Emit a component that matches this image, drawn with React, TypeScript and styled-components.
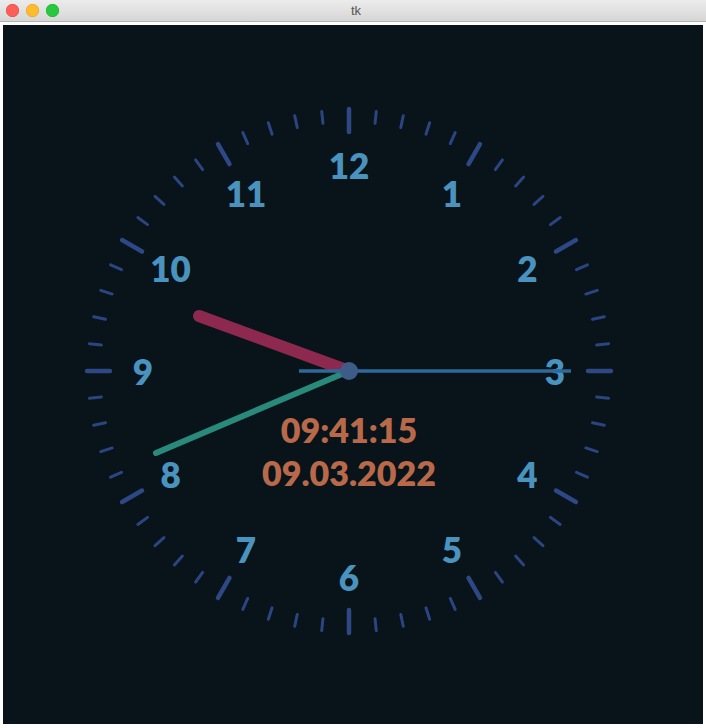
import React from "react";
import styled, { createGlobalStyle } from "styled-components";

const GlobalStyle = createGlobalStyle`
  html, body { margin: 0; padding: 0; background: #ffffff; }
  body { font-family: "Lato", "Liberation Sans", sans-serif; }
`;

const Window = styled.div`
  width: 706px;
  height: 728px;
  display: flex;
  flex-direction: column;
  background: #ffffff;
  overflow: hidden;
`;

const TitleBar = styled.div`
  height: 21px;
  flex: 0 0 21px;
  display: flex;
  align-items: center;
  position: relative;
  background: linear-gradient(#ececec, #d6d6d6);
  border-bottom: 1px solid #b4b4b4;
`;

const Lights = styled.div`
  display: flex;
  gap: 7px;
  padding-left: 6px;
`;

const Light = styled.span<{ $fill: string; $edge: string }>`
  width: 13px;
  height: 13px;
  border-radius: 50%;
  background: ${(p) => p.$fill};
  box-shadow: inset 0 0 0 0.5px ${(p) => p.$edge};
`;

const Title = styled.div`
  position: absolute;
  left: 0;
  right: 0;
  text-align: center;
  font-family: "Liberation Sans", "Noto Sans", sans-serif;
  font-weight: 400;
  font-size: 13px;
  color: #555555;
  padding-left: 6px;
`;

const Body = styled.div`
  flex: 1;
  display: flex;
  padding: 3px 3px 4px 3px;
`;

const Canvas = styled.div`
  flex: 1;
  background: #08131a;
  display: flex;
`;

const ClockSvg = styled.svg`
  display: block;
`;

const CX = 346;
const CY = 346;

const ticks = Array.from({ length: 60 }, (_, i) => {
  const a = (i * 6 * Math.PI) / 180;
  const major = i % 5 === 0;
  const r1 = major ? 239 : 249;
  const r2 = major ? 262 : 261;
  const s = Math.sin(a);
  const c = Math.cos(a);
  return {
    key: i,
    major,
    x1: CX + r1 * s,
    y1: CY - r1 * c,
    x2: CX + r2 * s,
    y2: CY - r2 * c,
  };
});

const numerals = Array.from({ length: 12 }, (_, i) => {
  const n = i + 1;
  const a = (n * 30 * Math.PI) / 180;
  return { n, x: CX + 206 * Math.sin(a), y: CY - 206 * Math.cos(a) };
});

const NUM_FONT = `"Lato", "Liberation Sans", sans-serif`;

export default function App() {
  return (
    <>
      <GlobalStyle />
      <Window>
        <TitleBar>
          <Lights>
            <Light $fill="#fc5f57" $edge="#de4840" />
            <Light $fill="#fdbc2e" $edge="#dd9d22" />
            <Light $fill="#28c840" $edge="#1aab29" />
          </Lights>
          <Title>tk</Title>
        </TitleBar>
        <Body>
          <Canvas>
            <ClockSvg width="700" height="699" viewBox="0 0 700 699">
              {ticks.map((t) => (
                <line
                  key={t.key}
                  x1={t.x1}
                  y1={t.y1}
                  x2={t.x2}
                  y2={t.y2}
                  stroke={t.major ? "#2d4884" : "#2b4580"}
                  strokeWidth={t.major ? 4.5 : 3}
                  strokeLinecap="round"
                />
              ))}
              {numerals.map((m) => (
                <text
                  key={m.n}
                  x={m.x}
                  y={m.y + 14}
                  textAnchor="middle"
                  fill="#4a93bf"
                  fontFamily={NUM_FONT}
                  fontWeight={800}
                  fontSize={35}
                >
                  {m.n}
                </text>
              ))}
              <text
                x={CX}
                y={418}
                textAnchor="middle"
                fill="#b8694a"
                fontFamily={NUM_FONT}
                fontWeight={800}
                fontSize={34}
              >
                09:41:15
              </text>
              <text
                x={CX}
                y={461}
                textAnchor="middle"
                fill="#b8694a"
                fontFamily={NUM_FONT}
                fontWeight={800}
                fontSize={34}
              >
                09.03.2022
              </text>
              <line
                x1={CX}
                y1={CY}
                x2={CX - 150}
                y2={CY - 55}
                stroke="#8d284e"
                strokeWidth={12}
                strokeLinecap="round"
              />
              <line
                x1={CX}
                y1={CY}
                x2={CX - 193}
                y2={CY + 82}
                stroke="#29897a"
                strokeWidth={6}
                strokeLinecap="round"
              />
              <line
                x1={CX - 50}
                y1={CY}
                x2={CX + 222}
                y2={CY}
                stroke="#2d6a9b"
                strokeWidth={3.5}
              />
              <circle cx={CX} cy={CY} r={9} fill="#3e5c88" />
            </ClockSvg>
          </Canvas>
        </Body>
      </Window>
    </>
  );
}
